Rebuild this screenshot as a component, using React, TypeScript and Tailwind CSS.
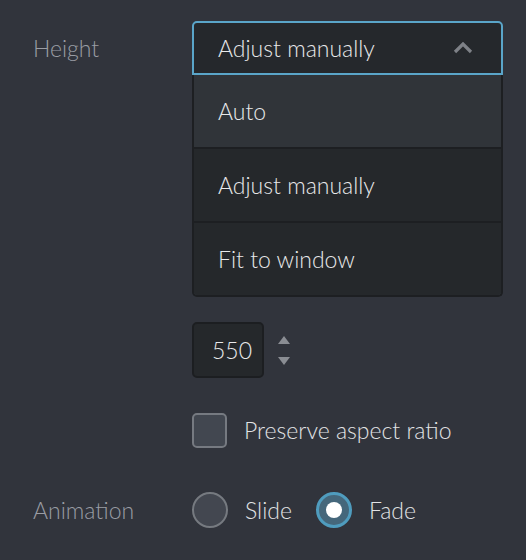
import React from "react";

export default function App() {
  return (
    <div
      className="w-[526px] h-[560px] bg-[#31343c] overflow-hidden text-[23px] font-light leading-none"
      style={{ fontFamily: "Lato, 'Open Sans', sans-serif" }}
    >
      <div className="pt-[21px] grid grid-cols-[192px_311px]">
        {/* Height row */}
        <div className="pl-[33px] h-[54px] flex items-center text-[#9a9da4]">Height</div>
        <div className="flex flex-col">
          <div className="h-[54px] bg-[#25282c] border-2 border-[#5aa5c9] rounded-t-[5px] flex items-center justify-between pl-[24px] pr-[28px] text-[#e8e9ea]">
            <span>Adjust manually</span>
            <svg width="20" height="12" viewBox="0 0 20 12">
              <path d="M2 10 L10 2 L18 10" fill="none" stroke="#7e8187" strokeWidth="3.2" />
            </svg>
          </div>
          <div className="border-x-2 border-b-2 border-[#1d1f22] rounded-b-[5px] overflow-hidden text-[#e8e9ea]">
            <div className="h-[74px] bg-[#303439] flex items-center pl-[24px] border-b-2 border-[#1d1f22]">Auto</div>
            <div className="h-[74px] bg-[#25282b] flex items-center pl-[24px] border-b-2 border-[#1d1f22]">Adjust manually</div>
            <div className="h-[72px] bg-[#25282b] flex items-center pl-[24px]">Fit to window</div>
          </div>

          {/* number input */}
          <div className="mt-[25px] flex items-center gap-[14px]">
            <div className="w-[72px] h-[56px] bg-[#25282b] border-2 border-[#1c1e21] rounded-[5px] flex items-center justify-end pr-[10px] text-[#e8e9ea]">
              550
            </div>
            <div className="flex flex-col gap-[13px]">
              <svg width="12" height="8" viewBox="0 0 12 8">
                <path d="M6 0 L12 8 L0 8 Z" fill="#8a8d93" />
              </svg>
              <svg width="12" height="8" viewBox="0 0 12 8">
                <path d="M0 0 L12 0 L6 8 Z" fill="#8a8d93" />
              </svg>
            </div>
          </div>

          {/* checkbox */}
          <div className="mt-[35px] flex items-center gap-[17px]">
            <div className="w-[35px] h-[35px] bg-[#424750] border-2 border-[#767a81] rounded-[5px]" />
            <span className="text-[#e2e3e5]">Preserve aspect ratio</span>
          </div>
        </div>

        {/* Animation row */}
        <div className="pl-[33px] mt-[44px] h-[36px] flex items-center text-[#9a9da4]">Animation</div>
        <div className="mt-[44px] flex items-center">
          <div className="w-[36px] h-[36px] rounded-full bg-[#434750] border-2 border-[#767a80]" />
          <span className="ml-[17px] text-[#e2e3e5]">Slide</span>
          <div className="ml-[24px] w-[36px] h-[36px] rounded-full bg-[#45677b] border-[3px] border-[#4f9cbe] flex items-center justify-center">
            <div className="w-[16px] h-[16px] rounded-full bg-white" />
          </div>
          <span className="ml-[17px] text-[#e2e3e5]">Fade</span>
        </div>
      </div>
    </div>
  );
}
